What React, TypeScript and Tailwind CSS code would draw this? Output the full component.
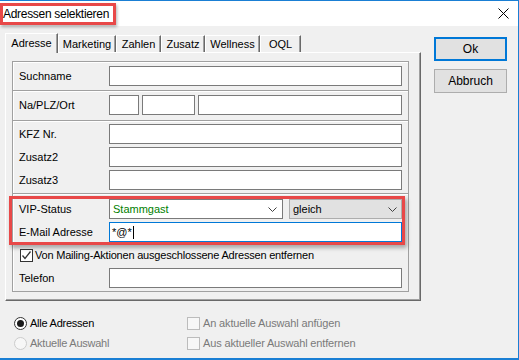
import React from "react";

const Chevron = () => (
  <svg width="9" height="5" viewBox="0 0 9 5" className="block">
    <path d="M0.5 0.5 L4.5 4.5 L8.5 0.5" fill="none" stroke="#404040" strokeWidth="1" />
  </svg>
);

const Field = ({ w, children, className = "" }: { w?: string; children?: React.ReactNode; className?: string }) => (
  <div className={`h-[20px] bg-white border border-[#7a7a7a] flex items-center ${w ?? "w-[293px]"} ${className}`}>{children}</div>
);

const Row = ({ label, children }: { label: string; children: React.ReactNode }) => (
  <div className="flex items-center h-[20px]">
    <div className="w-[90px] ml-[6px] text-[11px] text-black leading-none">{label}</div>
    {children}
  </div>
);

const Sep = () => (
  <div className="flex flex-col">
    <div className="h-px bg-[#a0a0a0]" />
    <div className="h-px bg-white" />
  </div>
);

const tabs = [
  { t: "Adresse", w: "w-[53px]", sel: true },
  { t: "Marketing", w: "w-[58px]" },
  { t: "Zahlen", w: "w-[45px]" },
  { t: "Zusatz", w: "w-[44px]" },
  { t: "Wellness", w: "w-[55px]" },
  { t: "OQL", w: "w-[41px]" },
];

export default function App() {
  return (
    <div className="w-[519px] h-[360px] bg-[#f0f0f0] border-t border-r border-b-2 border-[#1a7fd4] flex flex-col font-['Liberation_Sans',Arial,sans-serif] text-black overflow-hidden">
      {/* Title bar */}
      <div className="h-[25px] bg-white flex items-center justify-between shrink-0">
        <div className="h-[22px] w-[116px] border-[3px] border-[#e84848] shadow-[1px_2px_3px_rgba(0,0,0,0.3)] flex items-center">
          <span className="text-[12px] tracking-[-0.3px] leading-none pl-[0px]">Adressen selektieren</span>
        </div>
        <svg width="11" height="11" viewBox="0 0 11 11" className="mr-[9px]">
          <path d="M0.5 0.5 L10.5 10.5 M10.5 0.5 L0.5 10.5" stroke="#000" strokeWidth="1" />
        </svg>
      </div>

      {/* Body */}
      <div className="flex pl-[5px] pt-[7px]">
        <div className="flex flex-col w-[416px]">
          {/* Tabs */}
          <div className="flex items-end h-[19px]">
            {tabs.map((tb) =>
              tb.sel ? (
                <div
                  key={tb.t}
                  className={`${tb.w} h-[20px] mb-[-1px] relative z-10 bg-[#f0f0f0] border-t border-l border-white border-r border-r-[#696969] shadow-[inset_-1px_0_0_#a0a0a0] flex items-center justify-center text-[11px] leading-none pb-[1px]`}
                >
                  {tb.t}
                </div>
              ) : (
                <div
                  key={tb.t}
                  className={`${tb.w} h-[17px] bg-[#f0f0f0] border-t border-l border-white border-r border-r-[#696969] shadow-[inset_-1px_0_0_#a0a0a0] flex items-center justify-center text-[11px] leading-none`}
                >
                  {tb.t}
                </div>
              )
            )}
          </div>

          {/* Panel */}
          <div className="h-[249px] border-t border-l border-white border-r border-b border-r-[#696969] border-b-[#696969] shadow-[inset_-1px_-1px_0_#a0a0a0] pt-[8px] pl-[6px]">
            <div className="w-[397px] h-[231px] border border-[#a0a0a0] shadow-[inset_1px_1px_0_#fff] flex flex-col">
              {/* Section 1 */}
              <div className="h-[28px] pt-[4px]">
                <Row label="Suchname">
                  <Field />
                </Row>
              </div>
              <Sep />
              {/* Section 2 */}
              <div className="h-[28px] pt-[3px]">
                <Row label="Na/PLZ/Ort">
                  <div className="flex gap-[3px]">
                    <Field w="w-[30px]" />
                    <Field w="w-[53px]" />
                    <Field w="w-[204px]" />
                  </div>
                </Row>
              </div>
              <Sep />
              {/* Section 3 */}
              <div className="h-[71px] pt-[2px] flex flex-col gap-[3px]">
                <Row label="KFZ Nr.">
                  <Field />
                </Row>
                <Row label="Zusatz2">
                  <Field />
                </Row>
                <Row label="Zusatz3">
                  <Field />
                </Row>
              </div>
              <Sep />
              {/* Section 4 */}
              <div className="relative h-[96px] pt-[4px] flex flex-col gap-[3px]">
                <Row label="VIP-Status">
                  <div className="flex gap-[6px]">
                    <Field w="w-[174px]" className="justify-between pl-[3px] pr-[5px]">
                      <span className="text-[11px] leading-none text-[#008000]">Stammgast</span>
                      <Chevron />
                    </Field>
                    <div className="w-[113px] h-[20px] bg-[#e1e1e1] border border-[#adadad] flex items-center justify-between pl-[3px] pr-[4px]">
                      <span className="text-[11px] leading-none">gleich</span>
                      <Chevron />
                    </div>
                  </div>
                </Row>
                <Row label="E-Mail Adresse">
                  <div className="w-[293px] h-[20px] bg-white border border-[#0078d7] flex items-center pl-[2px]">
                    <span className="text-[11px] leading-none">*@*</span>
                    <span className="w-px h-[13px] bg-black ml-[1px]" />
                  </div>
                </Row>
                <div className="h-[20px] flex items-center pl-[7px]">
                  <div className="w-[13px] h-[13px] bg-white border border-[#333] flex items-center justify-center">
                    <svg width="11" height="11" viewBox="0 0 11 11">
                      <path d="M1.5 5.5 L4 8.5 L9.5 1.5" fill="none" stroke="#333" strokeWidth="1.3" />
                    </svg>
                  </div>
                  <span className="ml-[2px] text-[11px] tracking-[-0.2px] leading-none">
                    Von Mailing-Aktionen ausgeschlossene Adressen entfernen
                  </span>
                </div>
                <Row label="Telefon">
                  <Field />
                </Row>
                {/* annotation */}
                <div className="absolute left-[-4px] top-[1px] w-[396px] h-[49px] border-[3px] border-[#e84848] shadow-[2px_3px_4px_rgba(0,0,0,0.3)] pointer-events-none" />
              </div>
            </div>
          </div>

          {/* Bottom options */}
          <div className="flex mt-[12px] pl-[9px]">
            <div className="w-[173px] flex flex-col">
              <div className="h-[20px] flex items-center">
                <div className="w-[13px] h-[13px] rounded-full border border-[#333] bg-white flex items-center justify-center">
                  <div className="w-[7px] h-[7px] rounded-full bg-[#1a1a1a]" />
                </div>
                <span className="ml-[3px] text-[11px] tracking-[-0.25px] leading-none">Alle Adressen</span>
              </div>
              <div className="h-[20px] flex items-center">
                <div className="w-[13px] h-[13px] rounded-full border border-[#cccccc] bg-[#f7f7f7]" />
                <span className="ml-[3px] text-[11px] tracking-[-0.25px] leading-none text-[#7a7a7a]">Aktuelle Auswahl</span>
              </div>
            </div>
            <div className="flex flex-col">
              <div className="h-[20px] flex items-center">
                <div className="w-[13px] h-[13px] border border-[#bcbcbc] bg-[#f7f7f7]" />
                <span className="ml-[3px] text-[11px] tracking-[-0.15px] leading-none text-[#7a7a7a]">An aktuelle Auswahl anfügen</span>
              </div>
              <div className="h-[20px] flex items-center">
                <div className="w-[13px] h-[13px] border border-[#bcbcbc] bg-[#f7f7f7]" />
                <span className="ml-[3px] text-[11px] tracking-[-0.15px] leading-none text-[#7a7a7a]">Aus aktueller Auswahl entfernen</span>
              </div>
            </div>
          </div>
        </div>

        {/* Buttons */}
        <div className="ml-[13px] mt-[4px] flex flex-col gap-[8px]">
          <div className="w-[73px] h-[24px] bg-[#e1e1e1] border-2 border-[#0078d7] flex items-center justify-center text-[12px] leading-none">
            Ok
          </div>
          <div className="w-[73px] h-[24px] bg-[#e1e1e1] border border-[#adadad] flex items-center justify-center text-[12px] leading-none">
            Abbruch
          </div>
        </div>
      </div>
    </div>
  );
}
